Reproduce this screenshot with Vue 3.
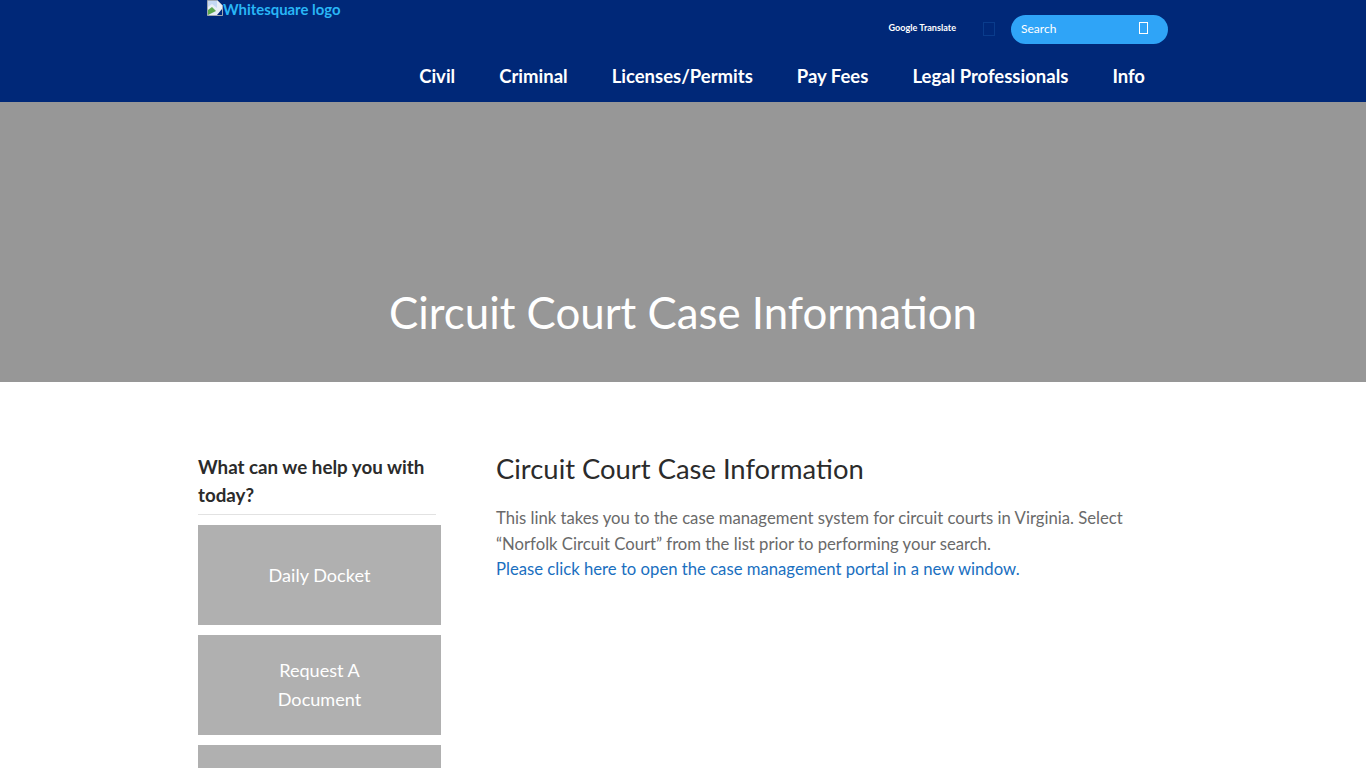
<template>
  <div class="page">
    <header class="header">
      <div class="wrap">
        <div class="top">
          <a class="logo" href="#">
            <svg class="broken" width="16" height="16" viewBox="0 0 16 16">
              <path d="M0.5 0.5H10.5L15.5 5.5V15.5H0.5Z" fill="#e8eef6" stroke="#a0a8b0" />
              <path d="M1 15V10L5 7L9 11L1 15Z" fill="#5da84e" />
              <path d="M1 7L5 4L10 8V1H1Z" fill="#c4d8f4" />
              <path d="M10 15L15 9V15Z" fill="#002878" />
            </svg>
            <span>Whitesquare logo</span>
          </a>
          <div class="tools">
            <span class="translate">Google Translate</span>
            <span class="box"></span>
            <div class="search">
              <span class="search-label">Search</span>
              <span class="glyph"></span>
            </div>
          </div>
        </div>
        <nav class="nav">
          <a v-for="item in navItems" :key="item" href="#">{{ item }}</a>
        </nav>
      </div>
    </header>
    <section class="hero">
      <h1>Circuit Court Case Information</h1>
    </section>
    <main class="content">
      <aside class="side">
        <h3>What can we help you with today?</h3>
        <a v-for="(b, i) in buttons" :key="i" class="tile" href="#">{{ b }}</a>
      </aside>
      <article class="body">
        <h2>Circuit Court Case Information</h2>
        <p>This link takes you to the case management system for circuit courts in Virginia. Select “Norfolk Circuit Court” from the list prior to performing your search.<br /><a href="#">Please click here to open the case management portal in a new window.</a></p>
      </article>
    </main>
  </div>
</template>

<script setup>
const navItems = ['Civil', 'Criminal', 'Licenses/Permits', 'Pay Fees', 'Legal Professionals', 'Info']
// third tile runs off the bottom of the window, its label is never seen
const buttons = ['Daily Docket', 'Request A Document', '']
</script>

<style>
html, body { overflow: hidden; height: 768px; }
</style>

<style scoped>
.page {
  font-family: Lato, "Open Sans", sans-serif;
  height: 768px;
  overflow: hidden;
  background: #fff;
}
.header {
  background: #002878;
  height: 102px;
}
.wrap {
  width: 968px;
  margin: 0 auto;
  padding-left: 7px;
  box-sizing: border-box;
  position: relative;
  left: 1px;
}
.top {
  display: flex;
  justify-content: space-between;
  height: 55px;
}
.logo {
  display: flex;
  align-items: flex-start;
  color: #29b6f6;
  font-size: 14.9px;
  font-weight: 700;
  text-decoration: none;
  line-height: 19px;
}
.tools {
  display: flex;
  align-items: center;
  height: 58px;
}
.translate {
  color: #fff;
  font-size: 9.1px;
  font-weight: 700;
  padding-bottom: 3px;
}
.box {
  width: 10px;
  height: 12px;
  border: 1px solid #0a3c8c;
  margin: 0 16px 0 27px;
}
.search {
  width: 157px;
  height: 29px;
  background: #2fa4f7;
  border-radius: 15px;
  display: flex;
  justify-content: space-between;
  align-items: center;
  padding: 0 20px 0 10px;
  box-sizing: border-box;
  color: #fff;
  font-size: 12px;
}
.search-label {
  padding-bottom: 1px;
}
.glyph {
  width: 7px;
  height: 10px;
  border: 1px solid #fff;
  margin-bottom: 2px;
}
.nav {
  display: flex;
  justify-content: flex-end;
  gap: 44px;
  padding-right: 23px;
}
.nav a {
  color: #fff;
  font-size: 18.5px;
  font-weight: 700;
  text-decoration: none;
  line-height: 43px;
}
.hero {
  background: #979797;
  height: 280px;
  display: flex;
  align-items: flex-end;
  justify-content: center;
}
.hero h1 {
  margin: 0 0 43px;
  color: #fff;
  font-size: 43.8px;
  font-weight: 400;
  line-height: 54px;
}
.content {
  width: 970px;
  margin: 0 auto;
  padding-top: 71px;
  display: flex;
  gap: 55px;
}
.side {
  width: 243px;
  flex: none;
}
.side h3 {
  margin: 0 5px 10px 0;
  padding-bottom: 5px;
  border-bottom: 1px solid #e2e2e2;
  color: #2b2b2b;
  font-size: 18.75px;
  line-height: 28px;
  font-weight: 700;
}
.tile {
  display: flex;
  align-items: center;
  justify-content: center;
  text-align: center;
  height: 100px;
  margin-bottom: 10px;
  padding: 0 60px;
  background: #b0b0b0;
  color: #fff;
  font-size: 18.1px;
  line-height: 29px;
  text-decoration: none;
}
.body h2 {
  margin: 0 0 21px;
  color: #2b2b2b;
  font-size: 27.4px;
  font-weight: 400;
  line-height: 32px;
}
.body p {
  margin: 0;
  width: 640px;
  color: #6a6a6a;
  font-size: 16.7px;
  line-height: 25.5px;
}
.body a {
  color: #1a6fbf;
  text-decoration: none;
}
</style>
